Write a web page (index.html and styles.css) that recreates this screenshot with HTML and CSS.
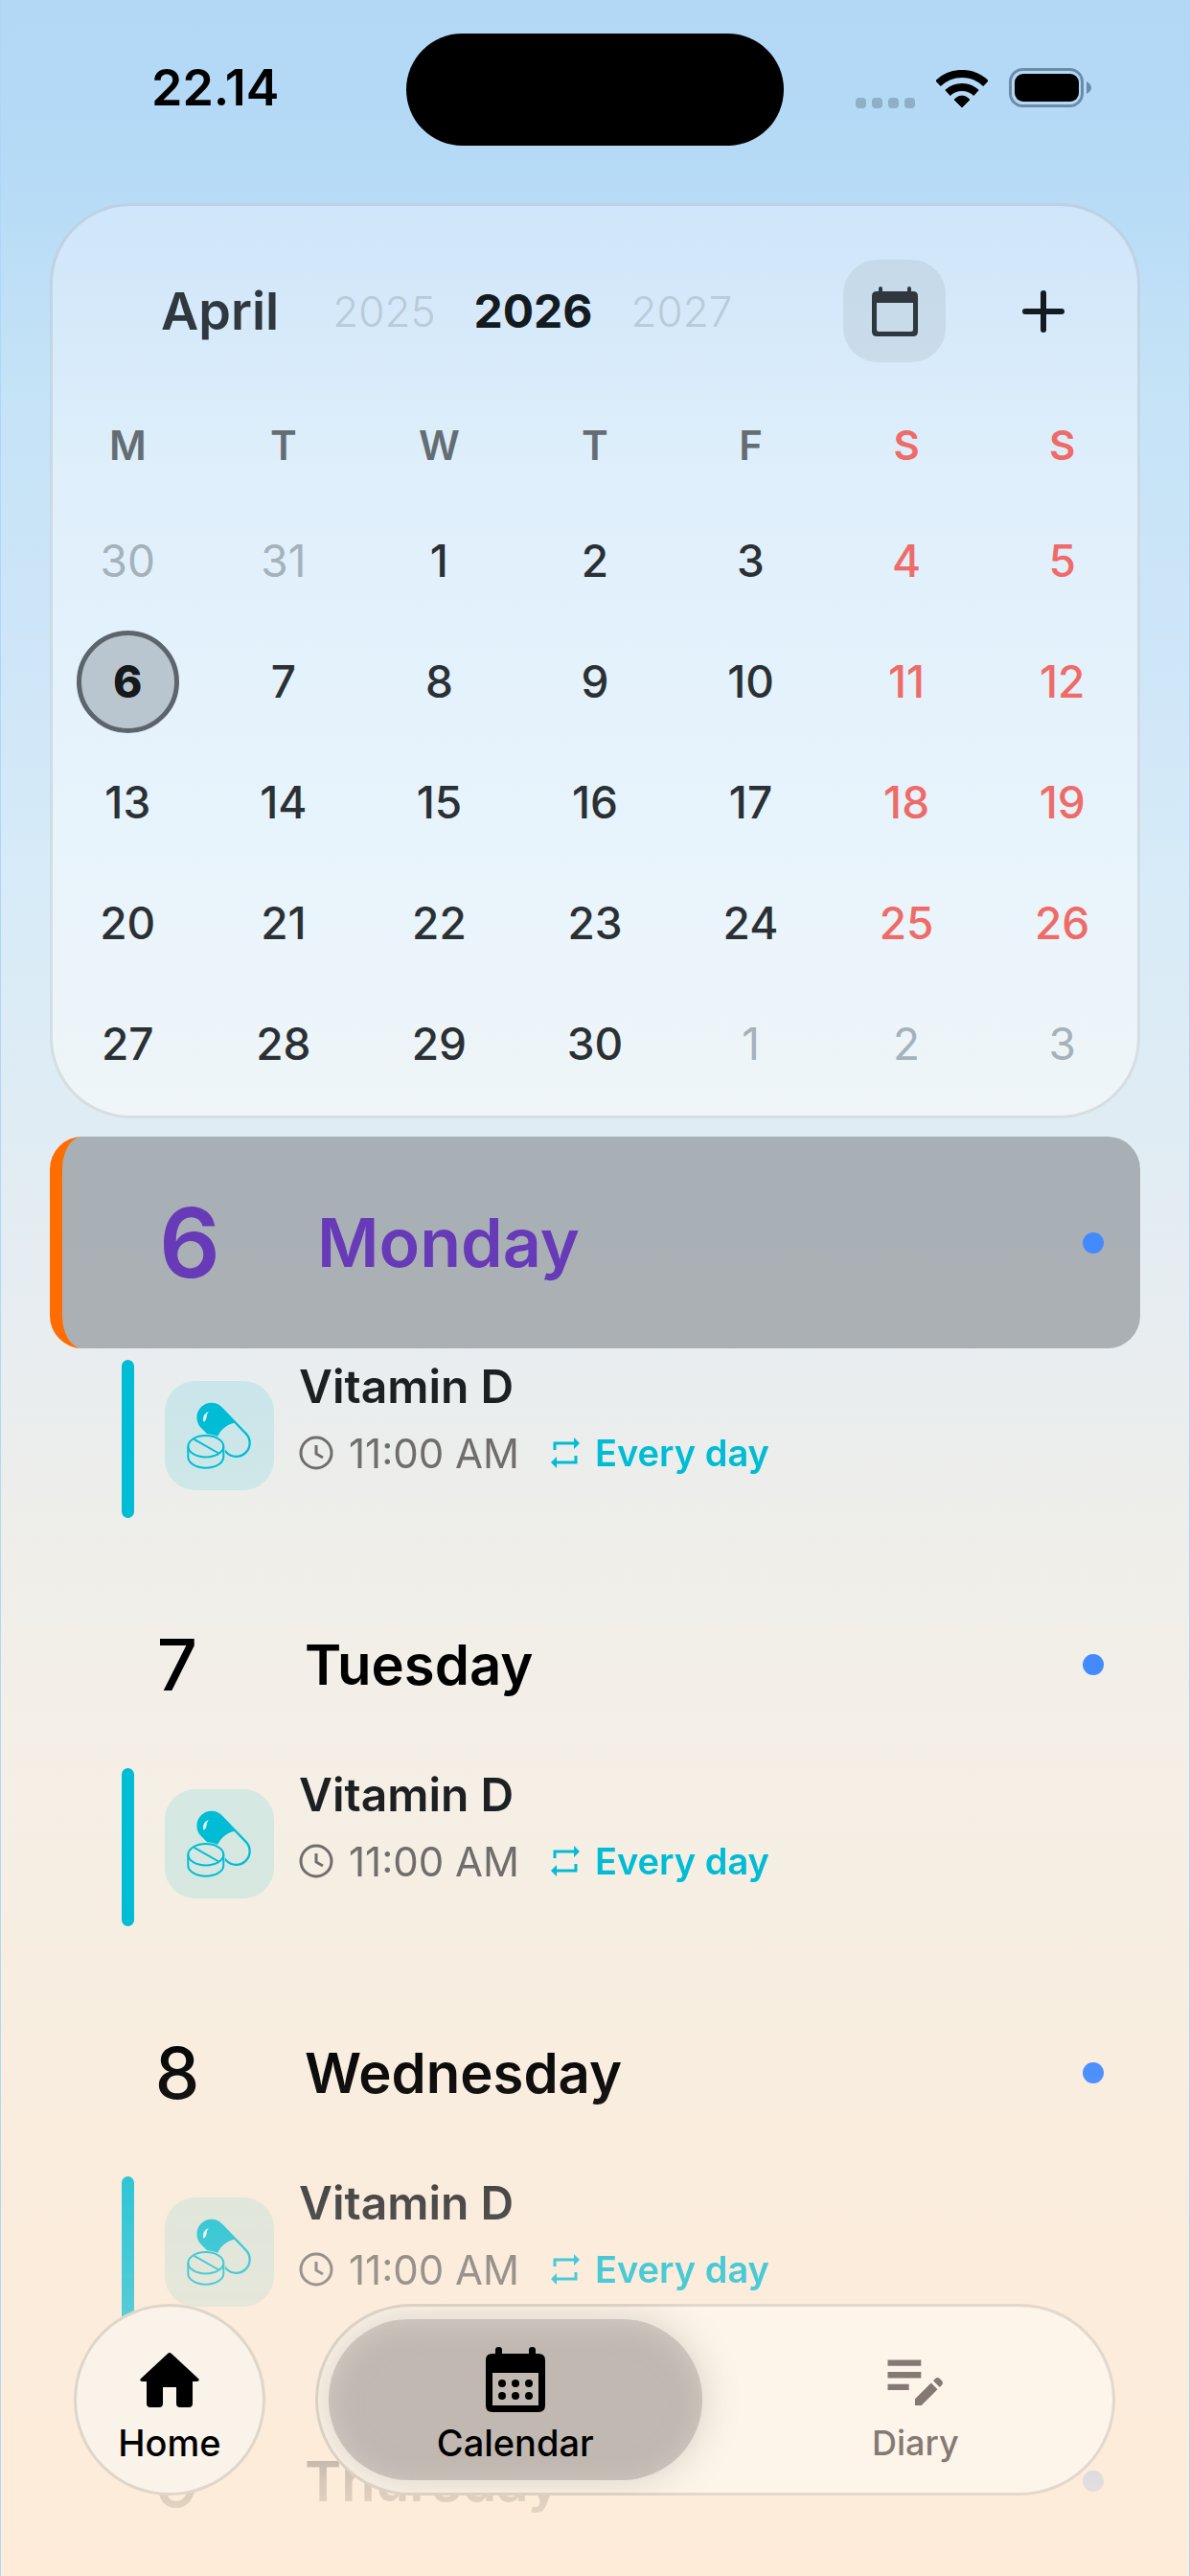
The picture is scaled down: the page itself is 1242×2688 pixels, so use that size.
FILE: index.html
```html
<!DOCTYPE html>
<html lang="en">
<head>
    <meta charset="UTF-8">
    <meta name="viewport" content="width=device-width, initial-scale=1.0">
    <title>Calendar</title>
    <link rel="stylesheet" href="styles.css">
</head>
<body>

    <!-- Shared icons -->
    <svg class="icon-defs" width="0" height="0" aria-hidden="true">
        <symbol id="icon-pills" viewBox="102 128 204 212">
            <mask id="tablet-gap" maskUnits="userSpaceOnUse" x="90" y="110" width="240" height="250">
                <rect x="90" y="110" width="240" height="250" fill="#fff"/>
                <path d="M101 268A60 39 0 0 1 222 268V304A60 39 0 0 1 101 304Z" fill="#000"/>
            </mask>
            <g mask="url(#tablet-gap)">
                <g transform="translate(218 217) rotate(46)">
                    <rect x="-99" y="-43" width="198" height="86" rx="43" fill="none" stroke="currentColor" stroke-width="7"/>
                    <path d="M8 -43H-56A43 43 0 0 0 -56 43H8Q-18 0 8 -43Z" fill="currentColor"/>
                </g>
                <path d="M170 158Q150 164 153 190Q160 190 163 178Q163 166 170 158Z" fill="#e6f6f8"/>
            </g>
            <g fill="none" stroke="currentColor" stroke-width="6">
                <ellipse cx="161" cy="268" rx="56" ry="34"/>
                <path d="M105 268V302A56 34 0 0 0 217 302V268"/>
                <path d="M124 246L202 290"/>
            </g>
        </symbol>
        <symbol id="icon-clock" viewBox="0 0 36 36">
            <circle cx="18" cy="18" r="16" fill="none" stroke="currentColor" stroke-width="3"/>
            <path d="M18 10V19L25 23" fill="none" stroke="currentColor" stroke-width="3"/>
        </symbol>
        <symbol id="icon-repeat" viewBox="0 0 30 32">
            <path d="M4 13V6H24M26 19V26H6" fill="none" stroke="currentColor" stroke-width="3"/>
            <path d="M24 0L30 6L24 12ZM6 20L0 26L6 32Z" fill="currentColor"/>
        </symbol>
    </svg>

    <div class="app">
        <!-- Status bar -->
        <header class="status-bar">
            <span class="status-time">22.14</span>
            <span class="island"></span>
            <div class="status-icons">
                <svg width="62" height="12" viewBox="0 0 62 12">
                    <g fill="#8fafc6">
                        <rect x="0" y="1" width="11" height="11" rx="4"/>
                        <rect x="17" y="1" width="11" height="11" rx="4"/>
                        <rect x="34" y="1" width="11" height="11" rx="4"/>
                        <rect x="51" y="1" width="11" height="11" rx="4"/>
                    </g>
                </svg>
                <svg width="54" height="40" viewBox="0 0 54 40">
                    <g fill="none" stroke="#000" stroke-width="8">
                        <path d="M2 14A36 36 0 0 1 52 14"/>
                        <path d="M12 24A22 22 0 0 1 42 24"/>
                    </g>
                    <path d="M27 39L19 31Q27 23 35 31Z" stroke="#000" stroke-width="1"/>
                </svg>
                <svg width="86" height="42" viewBox="0 0 86 42">
                    <rect x="1.5" y="1.5" width="75" height="38" rx="13" fill="none" stroke="#6b8ca8" stroke-width="3"/>
                    <rect x="6" y="6" width="67" height="29" rx="9"/>
                    <path d="M81 14Q86 17 86 21Q86 24 81 27Z" fill="#6b8ca8"/>
                </svg>
            </div>
        </header>

        <!-- Month card -->
        <section class="month-card">
            <div class="month-header">
                <h1>April</h1>
                <div class="years">
                    <button>2025</button>
                    <button class="current">2026</button>
                    <button>2027</button>
                </div>
                <button class="icon-button today-button" aria-label="Today">
                    <svg width="48" height="52" viewBox="0 0 48 52">
                        <path fill="currentColor" fill-rule="evenodd" d="M7 2Q7 0 9 0Q11 0 11 2V5H37V2Q37 0 39 0Q41 0 41 2V5H43Q48 5 48 10V47Q48 52 43 52H5Q0 52 0 47V10Q0 5 5 5H7ZM5 17V45Q5 47 7 47H41Q43 47 43 45V17Z"/>
                    </svg>
                </button>
                <button class="icon-button" aria-label="Add event">
                    <svg width="44" height="44" viewBox="0 0 44 44">
                        <path d="M22 3V41M3 22H41" stroke="currentColor" stroke-width="6" stroke-linecap="round"/>
                    </svg>
                </button>
            </div>
            <table class="month-table">
                <thead>
                    <tr><th>M</th><th>T</th><th>W</th><th>T</th><th>F</th><th class="weekend">S</th><th class="weekend">S</th></tr>
                </thead>
                <tbody>
                    <tr><td class="outside">30</td><td class="outside">31</td><td>1</td><td>2</td><td>3</td><td class="weekend">4</td><td class="weekend">5</td></tr>
                    <tr><td><span class="selected">6</span></td><td>7</td><td>8</td><td>9</td><td>10</td><td class="weekend">11</td><td class="weekend">12</td></tr>
                    <tr><td>13</td><td>14</td><td>15</td><td>16</td><td>17</td><td class="weekend">18</td><td class="weekend">19</td></tr>
                    <tr><td>20</td><td>21</td><td>22</td><td>23</td><td>24</td><td class="weekend">25</td><td class="weekend">26</td></tr>
                    <tr><td>27</td><td>28</td><td>29</td><td>30</td><td class="outside">1</td><td class="outside">2</td><td class="outside">3</td></tr>
                </tbody>
            </table>
        </section>

        <!-- Agenda list -->
        <main class="agenda">
            <section class="day">
                <div class="day-header active">
                    <span class="day-number">6</span>
                    <h2>Monday</h2>
                    <span class="dot"></span>
                </div>
                <article class="event">
                    <span class="event-bar"></span>
                    <span class="event-icon"><svg width="68" height="70"><use href="#icon-pills"/></svg></span>
                    <div class="event-text">
                        <h3>Vitamin D</h3>
                        <p>
                            <svg width="36" height="36"><use href="#icon-clock"/></svg>
                            <span class="event-time">11:00 AM</span>
                            <span class="event-repeat"><svg width="30" height="32"><use href="#icon-repeat"/></svg>Every day</span>
                        </p>
                    </div>
                </article>
            </section>

            <section class="day">
                <div class="day-header">
                    <span class="day-number">7</span>
                    <h2>Tuesday</h2>
                    <span class="dot"></span>
                </div>
                <article class="event">
                    <span class="event-bar"></span>
                    <span class="event-icon"><svg width="68" height="70"><use href="#icon-pills"/></svg></span>
                    <div class="event-text">
                        <h3>Vitamin D</h3>
                        <p>
                            <svg width="36" height="36"><use href="#icon-clock"/></svg>
                            <span class="event-time">11:00 AM</span>
                            <span class="event-repeat"><svg width="30" height="32"><use href="#icon-repeat"/></svg>Every day</span>
                        </p>
                    </div>
                </article>
            </section>

            <section class="day">
                <div class="day-header">
                    <span class="day-number">8</span>
                    <h2>Wednesday</h2>
                    <span class="dot"></span>
                </div>
                <article class="event">
                    <span class="event-bar"></span>
                    <span class="event-icon"><svg width="68" height="70"><use href="#icon-pills"/></svg></span>
                    <div class="event-text">
                        <h3>Vitamin D</h3>
                        <p>
                            <svg width="36" height="36"><use href="#icon-clock"/></svg>
                            <span class="event-time">11:00 AM</span>
                            <span class="event-repeat"><svg width="30" height="32"><use href="#icon-repeat"/></svg>Every day</span>
                        </p>
                    </div>
                </article>
            </section>

            <section class="day">
                <div class="day-header">
                    <span class="day-number">9</span>
                    <h2>Thursday</h2>
                    <span class="dot"></span>
                </div>
            </section>
        </main>

        <!-- Floating navigation -->
        <nav class="bottom-nav">
            <button class="nav-home">
                <svg width="62" height="68" viewBox="0 -6 62 68">
                    <path d="M29 1Q31 -1 33 1L61 27Q63 29 60 30H55V53Q55 57 51 57H42Q38 57 38 53V36H24V53Q24 57 20 57H11Q7 57 7 53V30H2Q-1 29 1 27Z"/>
                </svg>
                <span>Home</span>
            </button>
            <div class="nav-tabs">
                <button class="nav-tab active">
                    <svg width="62" height="68" viewBox="0 0 62 68">
                        <path fill-rule="evenodd" d="M10 3Q10 0 13.500 0Q17 0 17 3V7H45V3Q45 0 48.500 0Q52 0 52 3V7H55Q62 7 62 14V61Q62 68 55 68H7Q0 68 0 61V14Q0 7 7 7H10ZM7 27V61H55V27Z"/>
                        <circle cx="17" cy="38" r="4"/>
                        <circle cx="31" cy="38" r="4"/>
                        <circle cx="45" cy="38" r="4"/>
                        <circle cx="17" cy="51" r="4"/>
                        <circle cx="31" cy="51" r="4"/>
                        <circle cx="45" cy="51" r="4"/>
                    </svg>
                    <span>Calendar</span>
                </button>
                <button class="nav-tab">
                    <svg width="76" height="68" viewBox="0 2 24 21">
                        <path fill="currentColor" d="M3 10h11v2H3v-2zm0-2h11V6H3v2zm0 8h7v-2H3v2zm15.010-3.130.71-.71c.39-.39 1.020-.39 1.410 0l.71.71c.39.39.39 1.020 0 1.410l-.71.71-2.120-2.120zm-.71.71-5.300 5.300V21h2.120l5.300-5.300-2.120-2.120z"/>
                    </svg>
                    <span>Diary</span>
                </button>
            </div>
        </nav>
    </div>

</body>
</html>
```

FILE: styles.css
```css
* {
    box-sizing: border-box;
}
body {
    margin: 0;
    padding: 0 1px;
    background-color: #aed6f8;
    font-family: 'Inter', 'Liberation Sans', sans-serif;
    color: #000;
}
h1, h2, h3, p {
    margin: 0;
}
button {
    border: none;
    padding: 0;
    background: none;
    font-family: inherit;
    color: inherit;
    cursor: pointer;
}
svg {
    flex-shrink: 0;
}
.icon-defs {
    position: absolute;
}
.app {
    position: relative;
    display: flex;
    flex-direction: column;
    height: 100vh;
    overflow: hidden;
    background: linear-gradient(#b2d8f6 0%, #b5daf6 6%, #c5e3f7 15%, #cde5f8 24%, #d7ebf8 34%, #dfecf4 43%, #e8edf0 52%, #eeeeea 59%, #f4efe7 67%, #f7eee1 76%, #fbecdc 87%, #feecd9 100%);
}

/* Status bar */
.status-bar {
    display: grid;
    grid-template-columns: 1fr 394px 1fr;
    align-items: center;
    height: 212px;
    padding-bottom: 25px;
    flex-shrink: 0;
}
.status-time {
    padding: 0 0 4px 157px;
    font-size: 52px;
    font-weight: 600;
}
.island {
    height: 117px;
    border-radius: 59px;
    background-color: #000;
}
.status-icons {
    display: flex;
    align-items: flex-end;
    justify-content: flex-end;
    gap: 22px;
    padding: 0 102px 4px 0;
}

/* Month card */
.month-card {
    flex-shrink: 0;
    margin: 0 51px;
    padding: 59px 0 15px;
    border-radius: 84px;
    background: linear-gradient(#cfe5f9, #dfeffb 30%, #e8f4fc 70%, #eff5f8);
    box-shadow: inset 0 0 0 3px rgba(120, 130, 140, 0.2);
}
.month-header {
    display: flex;
    align-items: center;
    gap: 48px;
    margin-bottom: 28px;
    padding: 0 48px 0 116px;
    color: #2f383e;
}
.month-header h1 {
    font-size: 54px;
    font-weight: 600;
}
.years {
    display: flex;
    align-items: center;
    flex: 1;
    gap: 40px;
    padding-left: 8px;
}
.years button {
    font-size: 44px;
    font-weight: 300;
    color: #b9cbd9;
}
.years .current {
    font-size: 48px;
    font-weight: 700;
    color: #141b20;
}
.icon-button {
    display: flex;
    align-items: center;
    justify-content: center;
    width: 107px;
    height: 107px;
    border-radius: 36px;
    color: #141b20;
}
.today-button {
    background-color: rgba(140, 155, 160, 0.18);
    color: #2f383e;
}
.month-table {
    width: 100%;
    table-layout: fixed;
    border-collapse: collapse;
}
.month-table th {
    height: 116px;
    padding: 0;
    font-size: 42px;
    font-weight: 600;
    color: #646d74;
}
.month-table td {
    height: 126px;
    padding: 0;
    font-size: 46px;
    font-weight: 500;
    text-align: center;
    color: #2a3034;
}
.month-table .weekend {
    color: #ef6b68;
}
.month-table .outside {
    font-weight: 400;
    color: #a6b1ba;
}
.selected {
    display: flex;
    align-items: center;
    justify-content: center;
    width: 107px;
    height: 107px;
    margin: 0 auto;
    border: 5px solid #5c656c;
    border-radius: 50%;
    background-color: #bac6cf;
    font-weight: 800;
    color: #14191c;
}

/* Agenda list */
.agenda {
    flex: 1;
    min-height: 0;
    overflow: hidden;
    margin-top: 19px;
    padding: 0 51px;
    /* Fades the list out behind the navigation */
    -webkit-mask-image: linear-gradient(#000 calc(100% - 570px), rgba(0, 0, 0, 0.8) calc(100% - 400px), rgba(0, 0, 0, 0.67) calc(100% - 280px), rgba(0, 0, 0, 0.15) calc(100% - 98px), transparent);
    mask-image: linear-gradient(#000 calc(100% - 570px), rgba(0, 0, 0, 0.8) calc(100% - 400px), rgba(0, 0, 0, 0.67) calc(100% - 280px), rgba(0, 0, 0, 0.15) calc(100% - 98px), transparent);
}
.day {
    margin-bottom: 53px;
}
.day-header {
    display: flex;
    align-items: center;
    height: 200px;
    margin-bottom: 8px;
    padding-right: 38px;
}
.day-number {
    width: 110px;
    margin: 0 78px;
    font-size: 74px;
    font-weight: 500;
    line-height: 88px;
    text-align: center;
}
.day-header h2 {
    flex: 1;
    font-size: 58px;
    font-weight: 600;
}
.day-header.active {
    height: 221px;
    margin-bottom: 12px;
    border-left: 13px solid #ff6d00;
    border-radius: 34px;
    background-color: rgba(115, 120, 125, 0.52);
    color: #673ab7;
}
.active .day-number {
    font-size: 100px;
    font-weight: 600;
}
.active h2 {
    font-size: 70px;
}
.dot {
    width: 22px;
    height: 22px;
    border-radius: 50%;
    background-color: #448aff;
}
.event {
    display: flex;
    align-items: flex-start;
    height: 165px;
    padding-left: 75px;
}
.event-bar {
    align-self: stretch;
    width: 13px;
    border-radius: 7px;
    background-color: #00bcd4;
}
.event-icon {
    display: flex;
    align-items: center;
    justify-content: center;
    width: 114px;
    height: 114px;
    margin: 22px 26px 0 32px;
    border-radius: 32px;
    background-color: rgba(0, 188, 212, 0.13);
    color: #00bcd4;
}
.event-text h3 {
    font-size: 48px;
    font-weight: 600;
    line-height: 56px;
    color: #1d2022;
}
.event-text p {
    display: flex;
    align-items: center;
    height: 48px;
    margin-top: 17px;
    color: #706e6c;
}
.event-time {
    margin: 0 33px 0 16px;
    font-size: 42px;
}
.event-repeat {
    display: flex;
    align-items: center;
    gap: 16px;
    font-size: 38px;
    font-weight: 600;
    color: #00bcd4;
}

/* Floating navigation */
.bottom-nav {
    position: absolute;
    right: 77px;
    bottom: 84px;
    left: 76px;
    display: flex;
    gap: 52px;
    height: 200px;
}
.bottom-nav button {
    display: flex;
    flex-direction: column;
    align-items: center;
    justify-content: center;
    gap: 10px;
    padding-top: 12px;
    font-size: 38px;
    font-weight: 500;
    line-height: 44px;
}
.nav-home, .nav-tabs {
    border-radius: 100px;
    box-shadow: inset 0 0 0 3px rgba(120, 100, 80, 0.2);
}
.bottom-nav .nav-home {
    width: 200px;
    background-color: #f9f3e9;
}
.nav-tabs {
    display: flex;
    flex: 1;
    overflow: hidden;
    background-color: #fdf5ea;
}
.bottom-nav .nav-tab {
    flex: 1;
    margin: 16px 14px;
    border-radius: 85px;
    font-size: 36px;
    color: #857a73;
}
.bottom-nav .nav-tab.active {
    background-color: #c0b8b1;
    box-shadow: inset 0 4px 30px rgba(235, 225, 215, 0.5), 0 0 40px rgba(90, 80, 70, 0.22);
    font-size: 38px;
    color: #000;
}
```
